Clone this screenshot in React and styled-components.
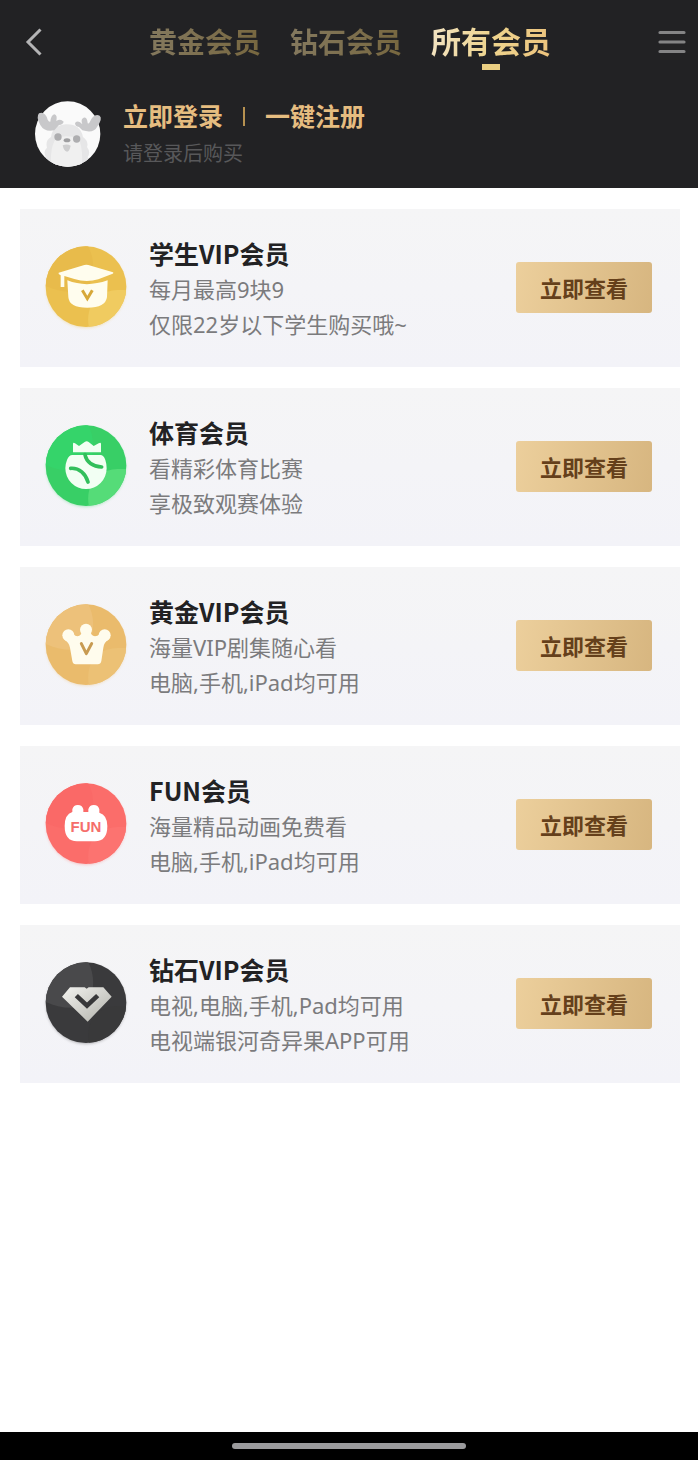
import React, { useState } from "react";
import styled, { createGlobalStyle } from "styled-components";

const GlobalStyle = createGlobalStyle`
  * {
    box-sizing: border-box;
  }
  body {
    margin: 0;
    background-color: #fff;
    font-family: "Noto Sans", "Noto Sans CJK SC", sans-serif;
  }
  button {
    border: none;
    padding: 0;
    background: none;
    font-family: inherit;
    cursor: pointer;
  }
  h2, p, ul {
    margin: 0;
    padding: 0;
  }
`;

const Page = styled.div`
  display: flex;
  flex-direction: column;
  min-height: 100vh;
`;

const Header = styled.header`
  height: 188px;
  background-color: #222224;
`;

const NavBar = styled.nav`
  display: flex;
  align-items: center;
  justify-content: space-between;
  height: 84px;
  padding: 0 12px 0 20px;
`;

const NavButton = styled.button`
  display: flex;
  width: 28px;
  height: 36px;
  align-items: center;
  justify-content: center;
`;

const Tabs = styled.div`
  display: flex;
  align-items: center;
  gap: 29px;
  padding-right: 6px;
`;

const Tab = styled.button`
  position: relative;
  font-size: ${(props) => (props.$active ? "30px" : "28px")};
  line-height: 44px;
  font-weight: bold;
  white-space: nowrap;

  span {
    color: transparent;
    background: ${(props) =>
      props.$active
        ? "linear-gradient(100deg, #f3e4c4, #eed48e 50%, #ecc27c)"
        : "linear-gradient(100deg, #84795f, #77673f)"};
    background-clip: text;
    -webkit-background-clip: text;
  }

  &::after {
    content: "";
    display: ${(props) => (props.$active ? "block" : "none")};
    position: absolute;
    left: 50%;
    bottom: -6px;
    width: 18px;
    height: 6px;
    margin-left: -9px;
    background-color: #ebcf82;
  }
`;

const User = styled.div`
  display: flex;
  align-items: center;
  gap: 20px;
  padding: 12px 31px;
`;

const LoginRow = styled.div`
  display: flex;
  align-items: center;
  gap: 20px;
`;

const LoginLink = styled.a`
  color: #e6bd80;
  font-size: 25px;
  line-height: 40px;
  font-weight: bold;
  text-decoration: none;
`;

const Divider = styled.span`
  width: 2px;
  height: 19px;
  background-color: #b69150;
`;

const LoginHint = styled.p`
  color: #58585a;
  font-size: 20px;
  line-height: 36px;
`;

const Main = styled.main`
  flex: 1;
  padding: 21px 18px 21px 20px;
`;

const CardList = styled.ul`
  display: flex;
  flex-direction: column;
  gap: 21px;
  list-style: none;
`;

const Card = styled.li`
  display: flex;
  align-items: center;
  min-height: 158px;
  padding: 22px 28px 24px 25px;
  background: linear-gradient(#f5f5f6, #f3f3f8);
`;

const CardText = styled.div`
  flex: 1;
  margin-left: 22px;
  padding-top: 2px;
`;

const CardTitle = styled.h2`
  color: #222224;
  font-family: "Noto Sans CJK SC", sans-serif;
  font-size: 25px;
  line-height: 38px;
  font-weight: bold;
`;

const CardLine = styled.p`
  color: #7b7b7d;
  font-size: 22px;
  line-height: 35px;
`;

const ViewButton = styled.button`
  width: 136px;
  height: 51px;
  border-radius: 3px;
  color: #65401b;
  font-size: 22px;
  font-weight: bold;
  background: linear-gradient(100deg, #eccf9c, #d7b680);
`;

const BottomBar = styled.footer`
  display: flex;
  align-items: center;
  justify-content: center;
  height: 28px;
  background-color: #000;
`;

const HomeIndicator = styled.div`
  width: 33.5%;
  height: 6px;
  border-radius: 3px;
  background-color: #9b9b9d;
`;

// round badge with a light and a dark part, the glyph goes on top
const Badge = ({ id, base, light, dark, children }) => (
  <svg width="82" height="84" viewBox="0 0 246 252" overflow="visible" aria-hidden="true">
    <defs>
      <clipPath id={`${id}-clip`}>
        <circle cx="123" cy="125" r="121" />
      </clipPath>
      <filter id={`${id}-blur`} x="-20%" y="-20%" width="140%" height="140%">
        <feGaussianBlur stdDeviation="5" />
      </filter>
    </defs>
    <circle cx="123" cy="129" r="119" fill={base} opacity="0.4" filter={`url(#${id}-blur)`} />
    <g clipPath={`url(#${id}-clip)`}>
      <rect width="246" height="248" fill={base} />
      <path d="M0 0H128C150 40 150 90 128 134C80 146 40 140 0 122Z" fill={dark} />
      <path d="M132 248C124 210 136 170 160 152C190 134 220 134 246 136V248Z" fill={light} />
    </g>
    {children}
  </svg>
);

const StudentIcon = () => (
  <Badge id="student" base="#ebc04f" light="#f0cb60" dark="#e8bb4b">
    <path d="M41 83L118 60Q124 58 130 60L204 82Q207 84 203 86L160 103Q124 113 88 102L58 93V126H47V91L41 87Z" fill="#fffdee" />
    <path d="M67 106Q124 129 188 106L186 156Q182 188 127 188Q72 188 70 156Z" fill="#fffdee" />
    <path d="M112 136L127 161L142 136" fill="none" stroke="#d7a838" strokeWidth="9" />
  </Badge>
);

const SportIcon = () => (
  <Badge id="sport" base="#38cf66" light="#55dc78" dark="#35d46a">
    <path d="M84 85V60Q84 54 90 58L102 66L119 54Q125 50 131 54L146 66L161 58Q168 54 168 60V85Z" fill="#f2fff3" />
    <path d="M82 93H166Q176 93 181 108Q185 120 185 133A62 62 0 0 1 61 133Q61 120 66 108Q72 93 82 93Z" fill="#f2fff3" />
    <path d="M77 133C103 131 122 150 129 174M120 92C124 114 144 128 170 129" fill="none" stroke="#32bf5b" strokeWidth="11" strokeLinecap="round" />
  </Badge>
);

const GoldIcon = () => (
  <Badge id="gold" base="#eabb6c" light="#ecc175" dark="#edc17a">
    <g fill="#fffced">
      <circle cx="70" cy="97" r="18" />
      <circle cx="123" cy="80" r="18" />
      <circle cx="179" cy="97" r="18" />
      <path d="M58 110L84 93Q98 106 108 94L112 84H135L139 94Q149 106 165 93L190 110Q177 117 175 134L169 174Q167 184 158 184H92Q84 184 82 174L75 134Q72 117 58 110Z" />
    </g>
    <path d="M109 122L124 152L140 122" fill="none" stroke="#c89b51" strokeWidth="9" strokeLinecap="round" strokeLinejoin="round" />
  </Badge>
);

const FunIcon = () => (
  <Badge id="fun" base="#fb6d6a" light="#fc7370" dark="#fa6967">
    <path d="M82 86V82A17 17 0 0 1 115 82V90H130V82A17 17 0 0 1 163 82V92Q187 99 187 132Q187 178 150 178H96Q59 178 59 132Q59 97 82 90Z" fill="#fff" />
    <text x="123" y="151" textAnchor="middle" fontFamily="Liberation Sans, sans-serif" fontWeight="bold" fontSize="45" fill="#f56e6b">FUN</text>
  </Badge>
);

const DiamondIcon = () => (
  <Badge id="diamond" base="#3a3a3c" light="#39393a" dark="#49494b">
    <defs>
      <linearGradient id="silver" x1="0" y1="0" x2="1" y2="1">
        <stop offset="0" stopColor="#f2f2ef" />
        <stop offset="1" stopColor="#b1b1aa" />
      </linearGradient>
    </defs>
    <path d="M75 79H119L125 83L131 79H175L200 107L128 182L51 107Z" fill="url(#silver)" />
    <path d="M94 104L126 134L158 104" fill="none" stroke="#373739" strokeWidth="14" />
  </Badge>
);

const Avatar = () => (
  <svg width="72" height="70" viewBox="0 0 216 210" role="img" aria-label="头像">
    <defs>
      <clipPath id="avatar-clip">
        <circle cx="110" cy="105" r="98" />
      </clipPath>
    </defs>
    <circle cx="110" cy="105" r="98" fill="#fafafa" />
    <g clipPath="url(#avatar-clip)">
      <path d="M54 210Q34 192 46 176Q34 158 48 146Q42 124 60 114Q64 80 104 76Q148 74 156 114Q174 128 168 144Q180 160 170 174Q180 192 160 210Z" fill="#e6e6e7" />
      <path d="M60 210Q56 136 78 118Q106 106 140 118Q158 140 152 210Z" fill="#f0f0f0" />
    </g>
    <path d="M70 94Q40 100 28 78Q14 54 24 43Q42 36 50 62Q54 70 58 68Q60 48 70 46Q80 48 76 66Q88 58 98 68Q96 76 84 78Z" fill="#c8c8ca" />
    <path d="M154 94Q188 104 198 84Q216 58 206 50Q188 42 176 70Q172 76 170 72Q168 54 158 56Q148 60 154 76Q142 62 132 72Q132 82 144 84Z" fill="#c8c8ca" />
    <circle cx="81" cy="114" r="11" fill="#aeaeb0" />
    <circle cx="137" cy="120" r="11" fill="#aeaeb0" />
    <ellipse cx="108" cy="124" rx="10" ry="6" fill="#9e9ea0" />
    <path d="M95 139Q108 134 119 140Q116 156 108 158Q98 156 95 139Z" fill="#cececf" />
  </svg>
);

const tabs = ["黄金会员", "钻石会员", "所有会员"];

const plans = [
  { title: "学生VIP会员", lines: ["每月最高9块9", "仅限22岁以下学生购买哦~"], icon: <StudentIcon /> },
  { title: "体育会员", lines: ["看精彩体育比赛", "享极致观赛体验"], icon: <SportIcon /> },
  { title: "黄金VIP会员", lines: ["海量VIP剧集随心看", "电脑,手机,iPad均可用"], icon: <GoldIcon /> },
  { title: "FUN会员", lines: ["海量精品动画免费看", "电脑,手机,iPad均可用"], icon: <FunIcon /> },
  { title: "钻石VIP会员", lines: ["电视,电脑,手机,Pad均可用", "电视端银河奇异果APP可用"], icon: <DiamondIcon /> },
];

const App = () => {
  const [activeTab, setActiveTab] = useState("所有会员");

  return (
    <Page lang="zh-CN">
      <GlobalStyle />
      <Header>
        <NavBar>
          <NavButton aria-label="返回">
            <svg width="18" height="30" viewBox="0 0 18 30" fill="none" stroke="#b4b4b5" strokeWidth="3">
              <path d="M15.5 2.500L3 15L15.5 27.500" />
            </svg>
          </NavButton>
          <Tabs>
            {tabs.map((tab) => (
              <Tab key={tab} $active={tab === activeTab} onClick={() => setActiveTab(tab)}>
                <span>{tab}</span>
              </Tab>
            ))}
          </Tabs>
          <NavButton aria-label="菜单">
            <svg width="28" height="24" viewBox="0 0 28 24" stroke="#848485" strokeWidth="3.2" strokeLinecap="round">
              <path d="M2 2.500H26M2 12H26M2 21.500H26" />
            </svg>
          </NavButton>
        </NavBar>
        <User>
          <Avatar />
          <div>
            <LoginRow>
              <LoginLink href="#login">立即登录</LoginLink>
              <Divider />
              <LoginLink href="#register">一键注册</LoginLink>
            </LoginRow>
            <LoginHint>请登录后购买</LoginHint>
          </div>
        </User>
      </Header>
      <Main>
        <CardList>
          {plans.map((plan) => (
            <Card key={plan.title}>
              {plan.icon}
              <CardText>
                <CardTitle>{plan.title}</CardTitle>
                {plan.lines.map((line) => (
                  <CardLine key={line}>{line}</CardLine>
                ))}
              </CardText>
              <ViewButton>立即查看</ViewButton>
            </Card>
          ))}
        </CardList>
      </Main>
      <BottomBar>
        <HomeIndicator />
      </BottomBar>
    </Page>
  );
};

export default App;
